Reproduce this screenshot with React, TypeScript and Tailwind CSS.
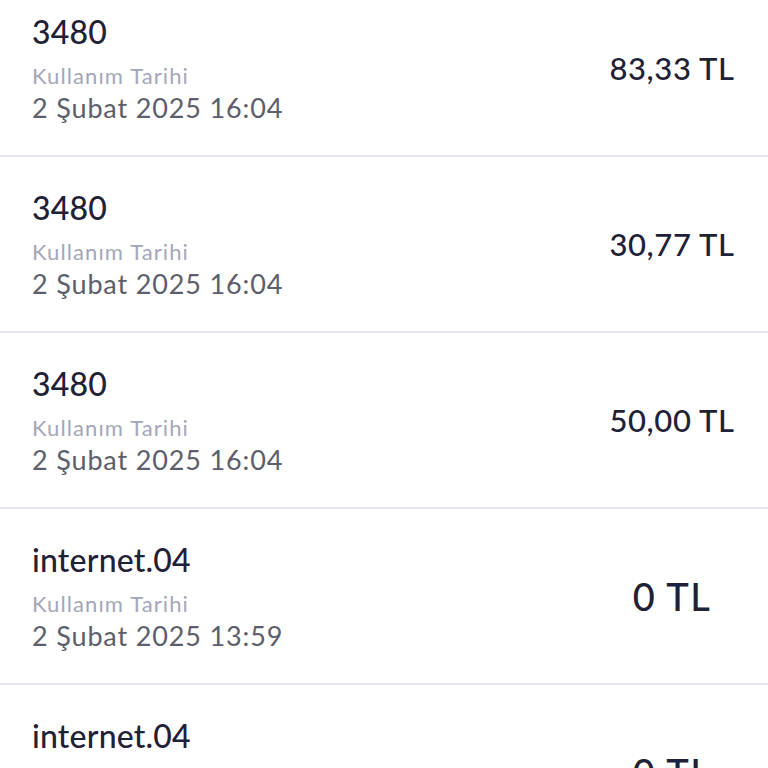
import React from 'react';

interface Usage {
    name: string;
    date: string;
    amount: string;
    big?: boolean;
}

const usages: Usage[] = [
    { name: '3480', date: '2 Şubat 2025 16:04', amount: '83,33 TL' },
    { name: '3480', date: '2 Şubat 2025 16:04', amount: '30,77 TL' },
    { name: '3480', date: '2 Şubat 2025 16:04', amount: '50,00 TL' },
    { name: 'internet.04', date: '2 Şubat 2025 13:59', amount: '0 TL', big: true },
    { name: 'internet.04', date: '2 Şubat 2025 13:59', amount: '0 TL', big: true },
];

const UsageRow: React.FC<{ item: Usage }> = ({ item }) => (
    <div className="h-[176px] flex items-center justify-between pl-8 pr-[31px] border-b-2 border-[#e7e7ee]">
        <div className="flex flex-col">
            <div className="text-[32px] leading-[40px] font-medium tracking-[0.2px] text-[#1f2137]">{item.name}</div>
            <div className="mt-[10px] text-[22px] leading-[28px] tracking-[1.1px] text-[#a6a6bb]">Kullanım Tarihi</div>
            <div className="mt-px text-[27px] leading-[34px] tracking-[0.85px] text-[#5c5e6c]">{item.date}</div>
        </div>
        <div
            className={
                item.big
                    ? 'w-[130px] text-center text-[38px] leading-[44px] font-medium tracking-[1.5px] text-[#1f2137]'
                    : 'w-[130px] text-center text-[31px] leading-[38px] font-medium tracking-[0.6px] text-[#1f2137]'
            }
        >
            {item.amount}
        </div>
    </div>
);

export default function App() {
    return (
        <div
            className="w-[768px] h-[768px] overflow-hidden bg-white"
            style={{ fontFamily: 'Lato, "Noto Sans", sans-serif' }}
        >
            <div className="-mt-[19px]">
                {usages.map((u, i) => (
                    <UsageRow key={i} item={u} />
                ))}
            </div>
        </div>
    );
}
